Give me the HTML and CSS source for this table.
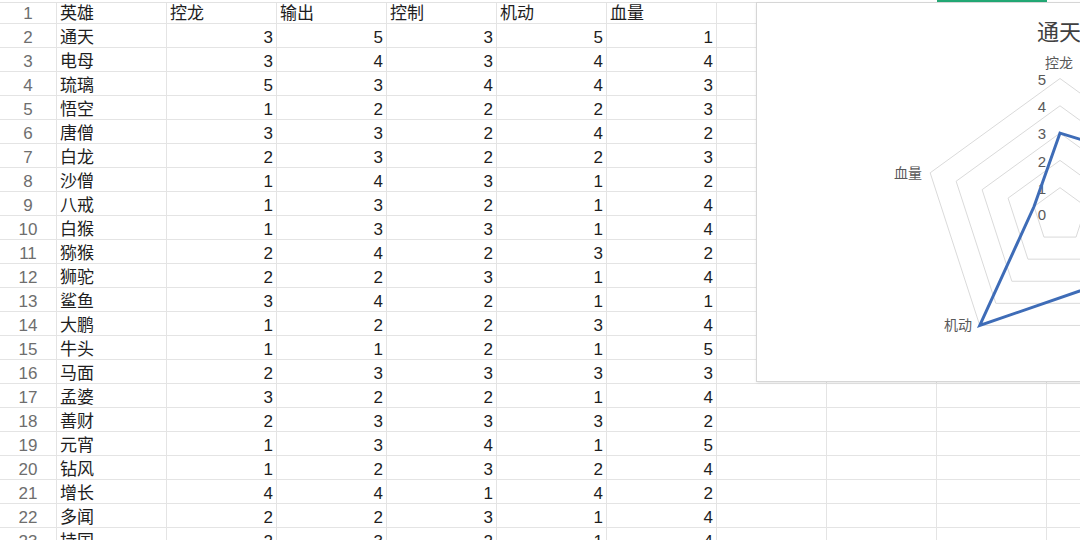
FILE: index.html
```html
<!DOCTYPE html>
<html lang="zh">
<head>
<meta charset="utf-8">
<title>英雄数据</title>
<link rel="stylesheet" href="styles.css">
</head>
<body>
<div class="page">
  <div class="colbar">
    <div class="cb rh"></div>
    <div class="cb"></div><div class="cb"></div><div class="cb"></div><div class="cb"></div><div class="cb"></div><div class="cb"></div><div class="cb"></div><div class="cb"></div>
    <div class="cb sel"></div>
    <div class="cb"></div>
  </div>
  <div class="sheet">
    <div class="row first"><div class="rn">1</div><div class="c">英雄</div><div class="c">控龙</div><div class="c">输出</div><div class="c">控制</div><div class="c">机动</div><div class="c">血量</div><div class="c"></div><div class="c"></div><div class="c"></div><div class="c"></div></div>
    <div class="row"><div class="rn">2</div><div class="c">通天</div><div class="c n">3</div><div class="c n">5</div><div class="c n">3</div><div class="c n">5</div><div class="c n">1</div><div class="c"></div><div class="c"></div><div class="c"></div><div class="c"></div></div>
    <div class="row"><div class="rn">3</div><div class="c">电母</div><div class="c n">3</div><div class="c n">4</div><div class="c n">3</div><div class="c n">4</div><div class="c n">4</div><div class="c"></div><div class="c"></div><div class="c"></div><div class="c"></div></div>
    <div class="row"><div class="rn">4</div><div class="c">琉璃</div><div class="c n">5</div><div class="c n">3</div><div class="c n">4</div><div class="c n">4</div><div class="c n">3</div><div class="c"></div><div class="c"></div><div class="c"></div><div class="c"></div></div>
    <div class="row"><div class="rn">5</div><div class="c">悟空</div><div class="c n">1</div><div class="c n">2</div><div class="c n">2</div><div class="c n">2</div><div class="c n">3</div><div class="c"></div><div class="c"></div><div class="c"></div><div class="c"></div></div>
    <div class="row"><div class="rn">6</div><div class="c">唐僧</div><div class="c n">3</div><div class="c n">3</div><div class="c n">2</div><div class="c n">4</div><div class="c n">2</div><div class="c"></div><div class="c"></div><div class="c"></div><div class="c"></div></div>
    <div class="row"><div class="rn">7</div><div class="c">白龙</div><div class="c n">2</div><div class="c n">3</div><div class="c n">2</div><div class="c n">2</div><div class="c n">3</div><div class="c"></div><div class="c"></div><div class="c"></div><div class="c"></div></div>
    <div class="row"><div class="rn">8</div><div class="c">沙僧</div><div class="c n">1</div><div class="c n">4</div><div class="c n">3</div><div class="c n">1</div><div class="c n">2</div><div class="c"></div><div class="c"></div><div class="c"></div><div class="c"></div></div>
    <div class="row"><div class="rn">9</div><div class="c">八戒</div><div class="c n">1</div><div class="c n">3</div><div class="c n">2</div><div class="c n">1</div><div class="c n">4</div><div class="c"></div><div class="c"></div><div class="c"></div><div class="c"></div></div>
    <div class="row"><div class="rn">10</div><div class="c">白猴</div><div class="c n">1</div><div class="c n">3</div><div class="c n">3</div><div class="c n">1</div><div class="c n">4</div><div class="c"></div><div class="c"></div><div class="c"></div><div class="c"></div></div>
    <div class="row"><div class="rn">11</div><div class="c">猕猴</div><div class="c n">2</div><div class="c n">4</div><div class="c n">2</div><div class="c n">3</div><div class="c n">2</div><div class="c"></div><div class="c"></div><div class="c"></div><div class="c"></div></div>
    <div class="row"><div class="rn">12</div><div class="c">狮驼</div><div class="c n">2</div><div class="c n">2</div><div class="c n">3</div><div class="c n">1</div><div class="c n">4</div><div class="c"></div><div class="c"></div><div class="c"></div><div class="c"></div></div>
    <div class="row"><div class="rn">13</div><div class="c">鲨鱼</div><div class="c n">3</div><div class="c n">4</div><div class="c n">2</div><div class="c n">1</div><div class="c n">1</div><div class="c"></div><div class="c"></div><div class="c"></div><div class="c"></div></div>
    <div class="row"><div class="rn">14</div><div class="c">大鹏</div><div class="c n">1</div><div class="c n">2</div><div class="c n">2</div><div class="c n">3</div><div class="c n">4</div><div class="c"></div><div class="c"></div><div class="c"></div><div class="c"></div></div>
    <div class="row"><div class="rn">15</div><div class="c">牛头</div><div class="c n">1</div><div class="c n">1</div><div class="c n">2</div><div class="c n">1</div><div class="c n">5</div><div class="c"></div><div class="c"></div><div class="c"></div><div class="c"></div></div>
    <div class="row"><div class="rn">16</div><div class="c">马面</div><div class="c n">2</div><div class="c n">3</div><div class="c n">3</div><div class="c n">3</div><div class="c n">3</div><div class="c"></div><div class="c"></div><div class="c"></div><div class="c"></div></div>
    <div class="row"><div class="rn">17</div><div class="c">孟婆</div><div class="c n">3</div><div class="c n">2</div><div class="c n">2</div><div class="c n">1</div><div class="c n">4</div><div class="c"></div><div class="c"></div><div class="c"></div><div class="c"></div></div>
    <div class="row"><div class="rn">18</div><div class="c">善财</div><div class="c n">2</div><div class="c n">3</div><div class="c n">3</div><div class="c n">3</div><div class="c n">2</div><div class="c"></div><div class="c"></div><div class="c"></div><div class="c"></div></div>
    <div class="row"><div class="rn">19</div><div class="c">元宵</div><div class="c n">1</div><div class="c n">3</div><div class="c n">4</div><div class="c n">1</div><div class="c n">5</div><div class="c"></div><div class="c"></div><div class="c"></div><div class="c"></div></div>
    <div class="row"><div class="rn">20</div><div class="c">钻风</div><div class="c n">1</div><div class="c n">2</div><div class="c n">3</div><div class="c n">2</div><div class="c n">4</div><div class="c"></div><div class="c"></div><div class="c"></div><div class="c"></div></div>
    <div class="row"><div class="rn">21</div><div class="c">增长</div><div class="c n">4</div><div class="c n">4</div><div class="c n">1</div><div class="c n">4</div><div class="c n">2</div><div class="c"></div><div class="c"></div><div class="c"></div><div class="c"></div></div>
    <div class="row"><div class="rn">22</div><div class="c">多闻</div><div class="c n">2</div><div class="c n">2</div><div class="c n">3</div><div class="c n">1</div><div class="c n">4</div><div class="c"></div><div class="c"></div><div class="c"></div><div class="c"></div></div>
    <div class="row"><div class="rn">23</div><div class="c">持国</div><div class="c n">2</div><div class="c n">3</div><div class="c n">2</div><div class="c n">1</div><div class="c n">4</div><div class="c"></div><div class="c"></div><div class="c"></div><div class="c"></div></div>
  </div>

  <div class="chart">
    <svg class="radar" width="606" height="378" viewBox="757 3 606 378" xmlns="http://www.w3.org/2000/svg">
      <text class="title" x="1059" y="40" text-anchor="middle">通天</text>
      <g class="web">
        <polygon points="1060,187.7 1085.96,206.56 1076.05,237.09 1043.95,237.09 1034.04,206.56"/>
        <polygon points="1060,160.4 1111.93,198.13 1092.09,259.17 1027.91,259.17 1008.07,198.13"/>
        <polygon points="1060,133.1 1137.89,189.69 1108.14,281.26 1011.86,281.26 982.11,189.69"/>
        <polygon points="1060,105.8 1163.86,181.25 1124.19,303.34 995.81,303.34 956.14,181.25"/>
        <polygon points="1060,78.5 1189.82,172.82 1140.24,325.43 979.76,325.43 930.18,172.82"/>
      </g>
      <g class="ticks">
        <text x="1046" y="84.5" text-anchor="end">5</text>
        <text x="1046" y="111.5" text-anchor="end">4</text>
        <text x="1046" y="139" text-anchor="end">3</text>
        <text x="1046" y="166.5" text-anchor="end">2</text>
        <text x="1046" y="193.5" text-anchor="end">1</text>
        <text x="1046" y="219.5" text-anchor="end">0</text>
      </g>
      <polygon class="series" points="1060,133.1 1189.82,172.82 1108.14,281.26 979.76,325.43 1034.04,206.56"/>
      <g class="axis">
        <text x="1059" y="67.8" text-anchor="middle">控龙</text>
        <text x="922" y="177.8" text-anchor="end">血量</text>
        <text x="972" y="330.3" text-anchor="end">机动</text>
      </g>
    </svg>
  </div>
</div>
</body>
</html>
```

FILE: styles.css
```css
html, body {
  margin: 0;
  padding: 0;
  background: #ffffff;
}

body {
  width: 1080px;
  height: 540px;
  overflow: hidden;
  font-family: "Liberation Sans", "Noto Sans CJK SC", sans-serif;
  font-size: 17px;
  color: #1e1e1e;
}

.page {
  position: relative;
  width: 1080px;
  height: 540px;
  overflow: hidden;
}

.colbar {
  display: flex;
  height: 3px;
  width: 1157px;
}

.cb {
  flex: 0 0 110px;
  height: 2px;
  border-bottom: 1px solid #e2e2e2;
}

.cb.rh {
  flex-basis: 57px;
}

.cb.sel {
  height: 3px;
  border-bottom: none;
  background: #22a874;
}

.sheet {
  width: 1157px;
}

.row {
  display: grid;
  grid-template-columns: 57px repeat(10, 110px);
  height: 24px;
}

.row.first {
  height: 21px;
}

.rn,
.c {
  box-sizing: border-box;
  height: 100%;
  border-right: 1px solid #e4e4e4;
  border-bottom: 1px solid #e4e4e4;
  padding: 4px 3px 0 3px;
  line-height: 19px;
  white-space: nowrap;
  overflow: hidden;
}

.row.first .rn,
.row.first .c {
  padding-top: 1px;
}

.rn {
  text-align: center;
  color: #6e6e6e;
  padding-left: 0;
  padding-right: 0;
}

.n {
  text-align: right;
}

.chart {
  position: absolute;
  left: 757px;
  top: 3px;
  width: 606px;
  height: 378px;
  background: #ffffff;
  box-shadow: 0 0 0 1px #d6d6d6, 0 1px 3px rgba(0, 0, 0, 0.18);
}

.radar {
  display: block;
}

.radar text {
  font-family: "Liberation Sans", "Noto Sans CJK SC", sans-serif;
}

.title {
  font-size: 22px;
  fill: #404040;
}

.web polygon {
  fill: none;
  stroke: #dadada;
  stroke-width: 1;
}

.ticks text {
  font-size: 15px;
  fill: #595959;
}

.axis text {
  font-size: 14px;
  fill: #595959;
}

.series {
  fill: none;
  stroke: #3e6cb7;
  stroke-width: 3;
  stroke-linejoin: miter;
}
```
